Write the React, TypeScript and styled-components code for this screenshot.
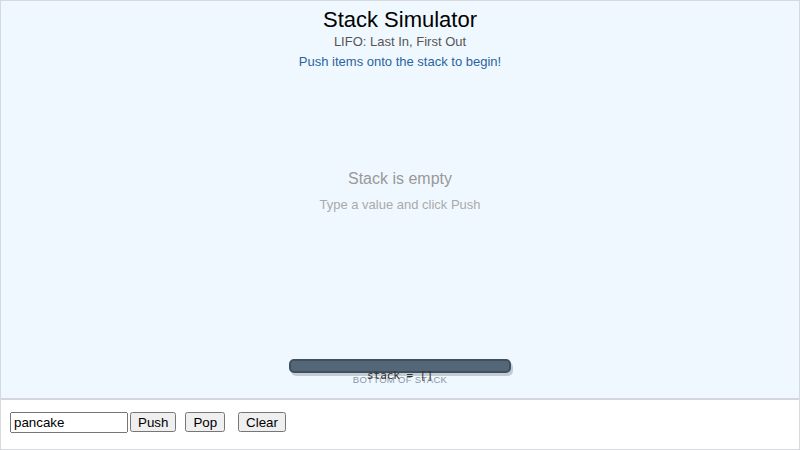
import React, { useState } from "react";
import styled, { createGlobalStyle } from "styled-components";

const Global = createGlobalStyle`
  html, body { margin: 0; padding: 0; background: #ffffff; }
  body { font-family: "Liberation Sans", Arial, sans-serif; }
  * { box-sizing: border-box; }
`;

const Frame = styled.div`
  width: 800px;
  height: 450px;
  border: 1px solid #d6d9dd;
  display: flex;
  flex-direction: column;
  font-family: "Liberation Sans", Arial, sans-serif;
`;

const Stage = styled.div`
  height: 399px;
  background: #f0f8ff;
  border-bottom: 2px solid #d3d6da;
  display: flex;
  flex-direction: column;
  align-items: center;
`;

const Header = styled.header`
  display: flex;
  flex-direction: column;
  align-items: center;
  padding-top: 6px;
`;

const Title = styled.h1`
  margin: 0;
  font-size: 22px;
  line-height: 26px;
  font-weight: normal;
  color: #000;
`;

const Subtitle = styled.div`
  margin-top: 1px;
  font-size: 13px;
  line-height: 16px;
  color: #555;
`;

const Hint = styled.div`
  margin-top: 4px;
  font-size: 13px;
  line-height: 16px;
  color: #2a63a0;
`;

const Middle = styled.div`
  flex: 1;
  display: flex;
  flex-direction: column;
  align-items: center;
  justify-content: center;
  padding-bottom: 48px;
`;

const EmptyTitle = styled.div`
  font-size: 16px;
  line-height: 20px;
  color: #999;
`;

const EmptySub = styled.div`
  margin-top: 8px;
  font-size: 13px;
  line-height: 16px;
  color: #aaa;
`;

const BaseArea = styled.div`
  position: relative;
  display: flex;
  flex-direction: column;
  align-items: center;
  padding-bottom: 13px;
`;

const Plate = styled.div`
  width: 222px;
  height: 14px;
  background: #546778;
  border: 2px solid #3f4f5e;
  border-radius: 5px;
  box-shadow: 2px 3px 0 rgba(0, 0, 0, 0.18);
`;

const BaseLabel = styled.div`
  margin-top: 1px;
  font-size: 9.5px;
  line-height: 11px;
  letter-spacing: 0.3px;
  text-transform: uppercase;
  color: #8796a6;
`;

const Code = styled.code`
  position: absolute;
  left: 50%;
  top: 10px;
  transform: translateX(-50%);
  font-family: "DejaVu Sans Mono", "Liberation Mono", monospace;
  font-size: 11px;
  line-height: 13px;
  color: #333;
  white-space: pre;
`;

const Controls = styled.div`
  flex: 1;
  display: flex;
  align-items: center;
  padding: 0 9px 5px;
`;

const ValueInput = styled.input`
  width: 118px;
  height: 21px;
  font-family: "Liberation Sans", Arial, sans-serif;
  font-size: 13.33px;
  padding: 1px 2px;
  margin: 0;
`;

const Btn = styled.button<{ $gap: number }>`
  margin: 0 0 0 ${(p) => p.$gap}px;
  font-family: "Liberation Sans", Arial, sans-serif;
  font-size: 13.33px;
  height: 20px;
`;

export default function App() {
  const [value, setValue] = useState("pancake");
  return (
    <>
      <Global />
      <Frame>
        <Stage>
          <Header>
            <Title>Stack Simulator</Title>
            <Subtitle>LIFO: Last In, First Out</Subtitle>
            <Hint>Push items onto the stack to begin!</Hint>
          </Header>
          <Middle>
            <EmptyTitle>Stack is empty</EmptyTitle>
            <EmptySub>Type a value and click Push</EmptySub>
          </Middle>
          <BaseArea>
            <Plate />
            <BaseLabel>Bottom of stack</BaseLabel>
            <Code>stack = []</Code>
          </BaseArea>
        </Stage>
        <Controls>
          <ValueInput value={value} onChange={(e) => setValue(e.target.value)} />
          <Btn $gap={2}>Push</Btn>
          <Btn $gap={9}>Pop</Btn>
          <Btn $gap={13}>Clear</Btn>
        </Controls>
      </Frame>
    </>
  );
}
